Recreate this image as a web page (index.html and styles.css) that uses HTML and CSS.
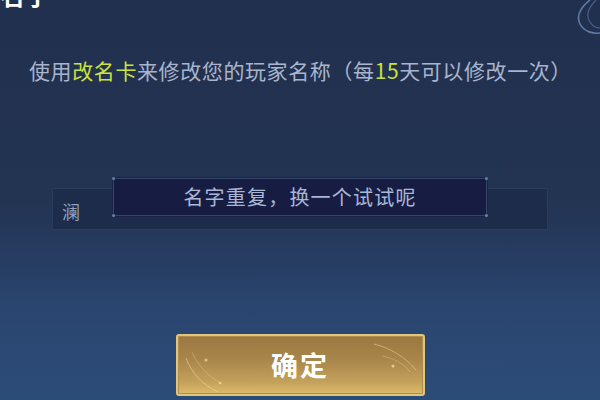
FILE: index.html
```html
<!DOCTYPE html>
<html lang="zh">
<head>
<meta charset="utf-8">
<link rel="stylesheet" href="styles.css">
</head>
<body>
<div class="page">
  <svg class="swirl" width="50" height="40" viewBox="0 0 50 40">
    <path d="M40 0 C30 8 26 16 30 24 C34 32 44 34 50 33" fill="none" stroke="#6f8fc0" stroke-width="1.6" opacity="0.8"/>
    <path d="M46 0 C38 8 36 16 40 22 C43 27 48 28 50 28" fill="none" stroke="#5f7fb0" stroke-width="1.2" opacity="0.6"/>
  </svg>
  <div class="title">名字</div>
  <p class="desc">使用<span class="hl">改名卡</span>来修改您的玩家名称（每<span class="hl">15</span>天可以修改一次）</p>
  <div class="field">
    <span class="value">澜</span>
    <div class="tip">
      <i class="dot tl"></i><i class="dot tr"></i><i class="dot bl"></i><i class="dot br"></i>
      名字重复，换一个试试呢
    </div>
  </div>
  <div class="btn">
    <svg class="shine" width="246" height="60" viewBox="0 0 246 60">
      <path d="M8 22 C14 38 24 48 40 56" fill="none" stroke="#f5dc9c" stroke-width="1" opacity="0.55"/>
      <path d="M14 16 C20 30 30 40 44 48" fill="none" stroke="#f5dc9c" stroke-width="0.8" opacity="0.4"/>
      <circle cx="28" cy="24" r="1.5" fill="#f7e3a8" opacity="0.7"/>
      <circle cx="42" cy="47" r="1.3" fill="#f7e3a8" opacity="0.7"/>
      <path d="M196 8 C212 12 226 20 238 34" fill="none" stroke="#f5dc9c" stroke-width="1" opacity="0.5"/>
      <path d="M204 20 C216 22 226 28 232 36" fill="none" stroke="#f5dc9c" stroke-width="0.8" opacity="0.4"/>
      <circle cx="215" cy="30" r="1.5" fill="#f7e3a8" opacity="0.7"/>
    </svg>
    <span class="btn-text">确定</span>
  </div>
</div>
</body>
</html>
```

FILE: styles.css
```css
* { box-sizing: border-box; }
html, body { margin: 0; padding: 0; }
body {
  width: 600px;
  height: 400px;
  overflow: hidden;
  font-family: "Noto Sans CJK SC", "Noto Sans", sans-serif;
}
.page {
  position: relative;
  width: 600px;
  height: 400px;
  overflow: hidden;
  background: linear-gradient(180deg, #22304f 0%, #233352 50%, #2a4670 78%, #2c4c78 100%);
  display: flex;
  flex-direction: column;
}
.swirl {
  position: absolute;
  top: 0;
  right: 0;
}
.title {
  margin-top: -23px;
  margin-left: 0;
  height: 34px;
  font-size: 25px;
  line-height: 34px;
  font-weight: 700;
  color: #ffffff;
}
.desc {
  margin: 39px 0 0 29px;
  font-size: 21px;
  line-height: 40px;
  letter-spacing: 0.6px;
  color: #a8b5cd;
  white-space: nowrap;
}
.hl { color: #c9e23c; }
.field {
  position: relative;
  margin: 98px 0 0 52px;
  width: 496px;
  height: 42px;
  background: #1c2c4a;
  border: 1px solid #2b3b5c;
  display: flex;
  align-items: center;
  padding-left: 9px;
}
.value {
  font-size: 18px;
  color: #8fa3c2;
  margin-top: 4px;
}
.tip {
  position: absolute;
  left: 60px;
  top: -11px;
  width: 374px;
  height: 38px;
  background: #171d42;
  border: 1px solid #36446c;
  box-shadow: 0 0 0 1px #1a2448;
  display: flex;
  align-items: center;
  justify-content: center;
  font-size: 20px;
  letter-spacing: 1.2px;
  color: #a9b7d6;
  padding-bottom: 2px;
}
.dot {
  position: absolute;
  width: 3px;
  height: 3px;
  border-radius: 50%;
  background: #6d7ea6;
}
.dot.tl { left: -2px; top: -2px; }
.dot.tr { right: -2px; top: -2px; }
.dot.bl { left: -2px; bottom: -2px; }
.dot.br { right: -2px; bottom: -2px; }
.btn {
  position: relative;
  margin: 104px auto 0;
  width: 249px;
  height: 62px;
  border: 2px solid #e2c57c;
  border-radius: 3px;
  background: linear-gradient(180deg, #9a7840 0%, #a8854a 40%, #c4a25c 80%, #dcbc6c 100%);
  box-shadow: inset 0 0 0 1px #b08e4e;
  display: flex;
  align-items: center;
  justify-content: center;
}
.shine {
  position: absolute;
  left: 0;
  top: 0;
}
.btn-text {
  position: relative;
  font-size: 27px;
  font-weight: 700;
  color: #ffffff;
  letter-spacing: 2px;
  margin-top: -1px;
}
```
